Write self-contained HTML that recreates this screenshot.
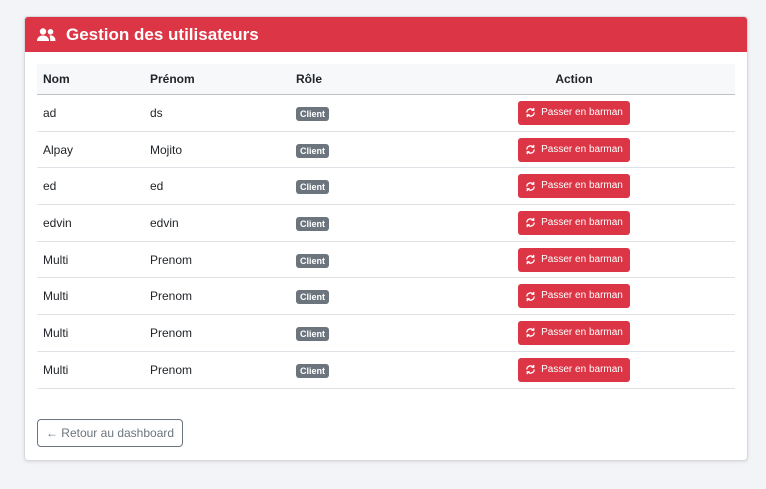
<!DOCTYPE html>
<html><head><meta charset="utf-8"><style>
body{margin:0;background:#f3f4f8;font-family:"Liberation Sans",sans-serif;width:766px;height:489px;overflow:hidden}
.card{position:absolute;left:24px;top:16px;width:722px;height:443px;background:#fff;border:1px solid #d6d8dc;border-radius:4px;box-shadow:0 1px 3px rgba(0,0,0,.1);overflow:hidden}
.hd{height:35px;background:#dc3545;color:#fff;display:flex;align-items:center;padding-left:12px;font-size:17px;font-weight:bold}
.hd svg{margin-right:10px}
table{position:absolute;left:12px;top:47px;width:698px;border-collapse:collapse;font-size:12px;color:#212529;table-layout:fixed}
th{background:#f7f8fa;height:30px;text-align:left;font-weight:bold;border-bottom:1px solid #bfc2c6;padding:0 6px}
td{height:35.7px;border-bottom:1px solid #dee2e6;padding:0 6px}
td:last-child{text-align:center}
.b{background:#6c757d;color:#fff;font-size:9px;font-weight:bold;border-radius:3px;padding:2px 4px}
.btn{display:inline-flex;align-items:center;background:#dc3545;color:#fff;font-size:10px;line-height:24px;border-radius:3px;height:24px;width:112px;justify-content:center;box-sizing:border-box;vertical-align:middle}
.btn svg{margin-right:5px}
.back{position:absolute;left:12px;top:402px;width:144px;height:26px;border:1px solid #6c757d;border-radius:4px;color:#6c757d;font-size:12px;display:flex;align-items:center;justify-content:center}
</style></head><body>
<div class="card">
<div class="hd"><svg width="19" height="14" viewBox="0 0 19 14" fill="#fff"><circle cx="6" cy="3.5" r="3.2"/><circle cx="13.5" cy="3.8" r="2.8"/><path d="M0 13c0-3.5 2.5-5.5 6-5.5s6 2 6 5.5z"/><path d="M12.5 7.5c3.5-.5 6 1.5 6 5.5h-5.2c0-2.3-.3-4-.8-5.5z"/></svg>Gestion des utilisateurs</div>
<table>
<colgroup><col style="width:107px"><col style="width:146px"><col style="width:123px"><col></colgroup>
<tr><th>Nom</th><th>Prénom</th><th>Rôle</th><th style="text-align:center">Action</th></tr>
<tr><td>ad</td><td>ds</td><td><span class="b">Client</span></td><td><span class="btn"><svg width="11" height="11" viewBox="0 0 12 12" fill="none" stroke="#fff" stroke-width="1.4"><path d="M2 6a4 4 0 0 1 7-2.6M10 6a4 4 0 0 1-7 2.6"/><path d="M9.5 1v2.5H7M2.5 11V8.5H5"/></svg>Passer en barman</span></td></tr>
<tr><td>Alpay</td><td>Mojito</td><td><span class="b">Client</span></td><td><span class="btn"><svg width="11" height="11" viewBox="0 0 12 12" fill="none" stroke="#fff" stroke-width="1.4"><path d="M2 6a4 4 0 0 1 7-2.6M10 6a4 4 0 0 1-7 2.6"/><path d="M9.5 1v2.5H7M2.5 11V8.5H5"/></svg>Passer en barman</span></td></tr>
<tr><td>ed</td><td>ed</td><td><span class="b">Client</span></td><td><span class="btn"><svg width="11" height="11" viewBox="0 0 12 12" fill="none" stroke="#fff" stroke-width="1.4"><path d="M2 6a4 4 0 0 1 7-2.6M10 6a4 4 0 0 1-7 2.6"/><path d="M9.5 1v2.5H7M2.5 11V8.5H5"/></svg>Passer en barman</span></td></tr>
<tr><td>edvin</td><td>edvin</td><td><span class="b">Client</span></td><td><span class="btn"><svg width="11" height="11" viewBox="0 0 12 12" fill="none" stroke="#fff" stroke-width="1.4"><path d="M2 6a4 4 0 0 1 7-2.6M10 6a4 4 0 0 1-7 2.6"/><path d="M9.5 1v2.5H7M2.5 11V8.5H5"/></svg>Passer en barman</span></td></tr>
<tr><td>Multi</td><td>Prenom</td><td><span class="b">Client</span></td><td><span class="btn"><svg width="11" height="11" viewBox="0 0 12 12" fill="none" stroke="#fff" stroke-width="1.4"><path d="M2 6a4 4 0 0 1 7-2.6M10 6a4 4 0 0 1-7 2.6"/><path d="M9.5 1v2.5H7M2.5 11V8.5H5"/></svg>Passer en barman</span></td></tr>
<tr><td>Multi</td><td>Prenom</td><td><span class="b">Client</span></td><td><span class="btn"><svg width="11" height="11" viewBox="0 0 12 12" fill="none" stroke="#fff" stroke-width="1.4"><path d="M2 6a4 4 0 0 1 7-2.6M10 6a4 4 0 0 1-7 2.6"/><path d="M9.5 1v2.5H7M2.5 11V8.5H5"/></svg>Passer en barman</span></td></tr>
<tr><td>Multi</td><td>Prenom</td><td><span class="b">Client</span></td><td><span class="btn"><svg width="11" height="11" viewBox="0 0 12 12" fill="none" stroke="#fff" stroke-width="1.4"><path d="M2 6a4 4 0 0 1 7-2.6M10 6a4 4 0 0 1-7 2.6"/><path d="M9.5 1v2.5H7M2.5 11V8.5H5"/></svg>Passer en barman</span></td></tr>
<tr><td>Multi</td><td>Prenom</td><td><span class="b">Client</span></td><td><span class="btn"><svg width="11" height="11" viewBox="0 0 12 12" fill="none" stroke="#fff" stroke-width="1.4"><path d="M2 6a4 4 0 0 1 7-2.6M10 6a4 4 0 0 1-7 2.6"/><path d="M9.5 1v2.5H7M2.5 11V8.5H5"/></svg>Passer en barman</span></td></tr>
</table>
<div class="back">← Retour au dashboard</div>
</div>
</body></html>
